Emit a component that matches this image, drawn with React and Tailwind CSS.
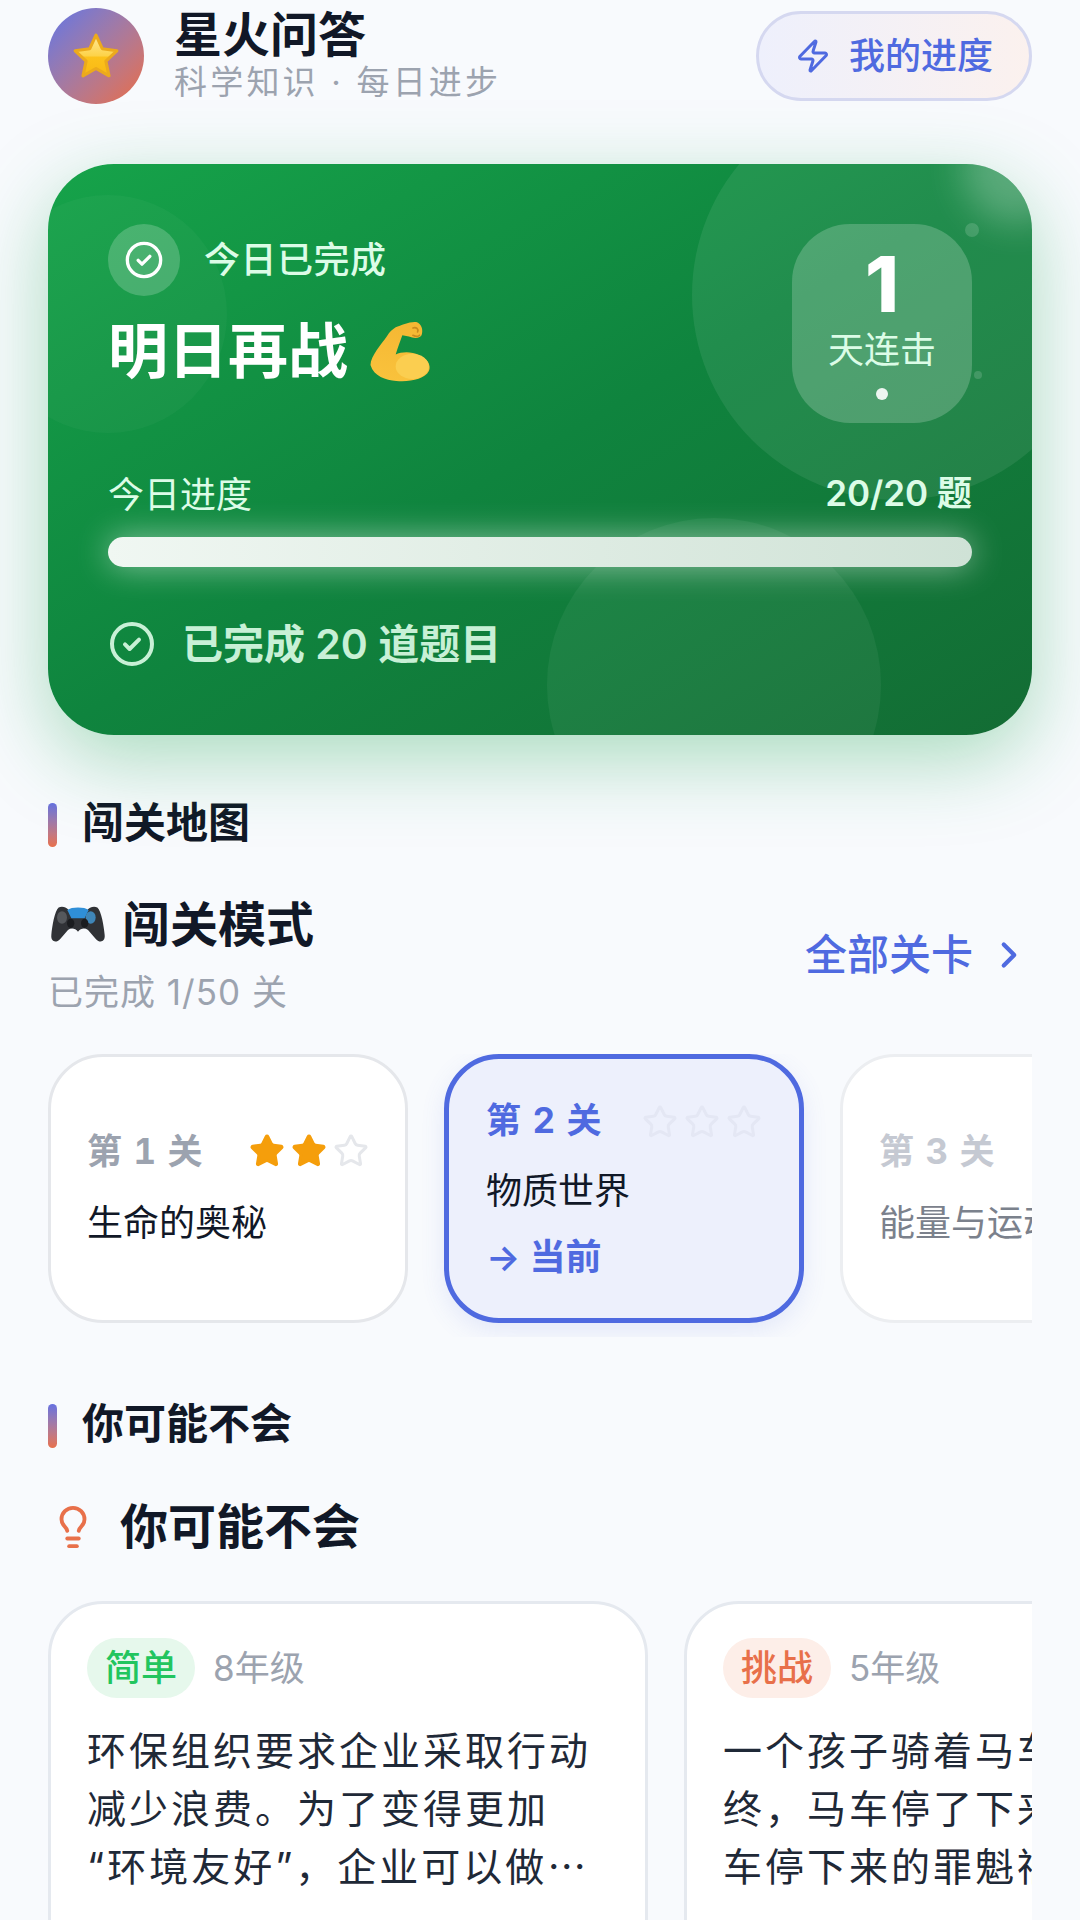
import React from "react";
import { ChevronRight, Lightbulb, Star, Zap } from "lucide-react";

const StarEmoji = () => (
  <svg width="50" height="50" viewBox="0 0 48 48">
    <defs>
      <linearGradient id="starFill" x1="0" y1="0" x2="0" y2="1">
        <stop offset="0" stopColor="#ffe99a" />
        <stop offset="0.5" stopColor="#fdd34a" />
        <stop offset="0.55" stopColor="#fcc21b" />
        <stop offset="1" stopColor="#f9b914" />
      </linearGradient>
    </defs>
    <path
      d="M24 4 L30 17 L44 19 L33.500 29 L36.500 43 L24 36 L11.500 43 L14.500 29 L4 19 L18 17 Z"
      fill="url(#starFill)"
      stroke="#ecaa1c"
      strokeWidth="3"
      strokeLinejoin="round"
    />
  </svg>
);

const MuscleEmoji = () => (
  <svg width="64" height="63" viewBox="25 20 192 190">
    <defs>
      <linearGradient id="armFill" x1="0.6" y1="0" x2="0.4" y2="1">
        <stop offset="0" stopColor="#f5b733" />
        <stop offset="1" stopColor="#f9c23c" />
      </linearGradient>
    </defs>
    <path
      d="M108 42 C125 36 150 24 170 26 C186 30 192 50 186 66 C178 78 160 74 148 70 L128 66 C122 84 114 104 108 124 C125 116 155 114 178 126 C204 136 216 156 208 174 C196 198 150 208 110 204 C78 202 42 190 32 156 C32 128 66 92 82 68 C90 56 98 48 108 42 Z"
      fill="url(#armFill)"
    />
    <ellipse cx="158" cy="160" rx="50" ry="38" fill="#fbce50" />
    <path d="M160 44 C170 40 178 48 174 56 M160 66 C168 70 176 70 180 66" fill="none" stroke="#c98a1e" strokeWidth="5" strokeLinecap="round" />
  </svg>
);

const GamepadEmoji = () => (
  <svg width="56" height="40" viewBox="36 36 168 96" preserveAspectRatio="none">
    <path
      d="M62 42 C74 38 86 42 94 50 L146 50 C154 42 166 38 178 42 C190 50 198 88 200 108 C202 124 186 128 174 118 L150 96 C140 90 128 92 120 100 C112 92 100 90 90 96 L66 118 C54 128 38 124 40 108 C42 88 50 50 62 42 Z"
      fill="#303236"
    />
    <path d="M88 48 C100 40 140 40 152 48 L140 68 H100 Z" fill="#2f8fd8" />
    <circle cx="158" cy="66" r="15" fill="#3f86b8" />
    <circle cx="72" cy="66" r="15" fill="#55585c" />
    <circle cx="98" cy="80" r="11" fill="#1a1c1f" />
    <circle cx="140" cy="80" r="11" fill="#1a1c1f" />
  </svg>
);

const SmallCheck = ({ size }) => (
  <svg width={size} height={size} viewBox="0 0 24 24" fill="none" stroke="currentColor" strokeWidth="2" strokeLinecap="round" strokeLinejoin="round">
    <circle cx="12" cy="12" r="10" />
    <path d="M8.500 12.200 L10.800 14.500 L15.500 9.800" />
  </svg>
);

const SectionTitle = ({ children, className }) => (
  <div className={`flex items-center gap-[25px] px-12 ${className}`}>
    <div className="w-[9px] h-[44px] rounded-full bg-gradient-to-b from-[#6670e0] to-[#e8704a]" />
    <h2 className="text-[42px] leading-[40px] pb-[4px] font-bold text-[#111827]">{children}</h2>
  </div>
);

const Stars = ({ filled, emptyColor }) => (
  <div className="flex gap-[6px]">
    {[0, 1, 2].map((i) =>
      i < filled ? (
        <Star key={i} size={36} strokeWidth={2} className="text-[#f59e0b]" fill="#f59e0b" />
      ) : (
        <Star key={i} size={36} strokeWidth={2} className={emptyColor} />
      )
    )}
  </div>
);

const QuestionCard = ({ level, levelClass, grade, lines }) => (
  <div className="w-[600px] h-[400px] shrink-0 rounded-[55px] border-[3px] border-[#e5e9ef] bg-white px-[36px] pt-[34px]">
    <div className="flex items-center gap-[18px]">
      <span className={`h-[60px] px-[18px] rounded-full flex items-center text-[36px] font-medium ${levelClass}`}>{level}</span>
      <span className="text-[35px] text-[#9ca3af]">{grade}</span>
    </div>
    <div className="mt-[24px] text-[39px] leading-[58px] tracking-[3px] text-[#1f2937] whitespace-nowrap">
      {lines.map((line) => (
        <div key={line}>{line}</div>
      ))}
    </div>
  </div>
);

export default function App() {
  return (
    <div lang="zh-CN" className="w-[1080px] h-[1920px] overflow-hidden bg-[#f8fafd] font-['Inter','Noto_Sans_CJK_SC',sans-serif]">
      <header className="flex items-center justify-between px-12 pt-2">
        <div className="flex items-center gap-[30px]">
          <div className="w-[96px] h-[96px] rounded-full bg-gradient-to-br from-[#5f73e6] to-[#ea6a3c] flex items-center justify-center">
            <StarEmoji />
          </div>
          <div>
            <h1 className="text-[48px] leading-[50px] font-bold text-[#111827]">星火问答</h1>
            <p className="mt-[2px] text-[33px] leading-[40px] tracking-[3.200px] text-[#9ca3af]">科学知识 · 每日进步</p>
          </div>
        </div>
        <button className="w-[276px] h-[90px] rounded-full border-[3px] border-[#d5d8f0] bg-gradient-to-r from-[#eef0fc] to-[#fbf1ee] flex items-center justify-center gap-[18px] text-[#4f6ae0]">
          <Zap size={36} strokeWidth={2} />
          <span className="text-[36px] font-medium">我的进度</span>
        </button>
      </header>

      <section className="relative mx-12 mt-[60px] h-[571px] overflow-hidden rounded-[66px] bg-gradient-to-br from-[#16a34a] via-[#0f843e] to-[#136c34] shadow-[0_24px_80px_rgba(22,163,74,0.35)] px-[60px] pt-[60px]">
        <div className="absolute left-[-59px] top-[31px] w-[238px] h-[238px] rounded-full bg-white/[0.03]" />
        <div className="absolute left-[644px] top-[-74px] w-[410px] h-[410px] rounded-full bg-white/[0.08]" />
        <div className="absolute left-[499px] top-[354px] w-[334px] h-[334px] rounded-full bg-white/[0.05]" />
        <div className="absolute left-[917px] top-[59px] w-[14px] h-[14px] rounded-full bg-white/15" />
        <div className="absolute left-[926px] top-[207px] w-[8px] h-[8px] rounded-full bg-white/15" />
        <div className="absolute right-[-40px] top-[-50px] w-[110px] h-[110px] rounded-full bg-white/25 blur-[18px]" />

        <div className="relative flex items-start justify-between">
          <div>
            <div className="flex items-center gap-[24px]">
              <div className="w-[72px] h-[72px] rounded-full bg-white/20 flex items-center justify-center text-white">
                <SmallCheck size={40} />
              </div>
              <span className="text-[36px] tracking-[0.500px] font-medium text-[#dcfce7]">今日已完成</span>
            </div>
            <div className="mt-[20px] flex items-center gap-[20px]">
              <h2 className="text-[60px] leading-[70px] font-bold text-white">明日再战</h2>
              <MuscleEmoji />
            </div>
          </div>
          <div className="w-[180px] h-[199px] rounded-[58px] bg-white/20 flex flex-col items-center pt-[22px]">
            <span className="text-[77px] leading-[76px] font-extrabold text-white">1</span>
            <span className="mt-[6px] text-[36px] leading-[44px] text-[#dcfce7]">天连击</span>
            <span className="mt-[16px] w-[12px] h-[12px] rounded-full bg-white/90" />
          </div>
        </div>

        <div className="relative mt-[48px] flex items-center justify-between h-[44px]">
          <span className="text-[36px] pt-[3px] text-[#dcfce7]">今日进度</span>
          <span className="text-[35px] font-semibold text-[#dcfce7]">20/20 题</span>
        </div>
        <div className="relative mt-[22px] h-[30px] rounded-full bg-gradient-to-r from-[#f0f7f2] to-[#cfe2d6] shadow-[0_0_33px_rgba(255,255,255,0.5)]" />
        <div className="relative mt-[53px] flex items-center gap-[26px] text-[#c8f0d6]">
          <SmallCheck size={48} />
          <span className="text-[41px] leading-[44px] font-semibold">已完成 20 道题目</span>
        </div>
      </section>

      <SectionTitle className="mt-[68px]">闯关地图</SectionTitle>

      <div className="mt-[50px] flex items-center justify-between px-12 pr-[50px]">
        <div>
          <div className="flex items-center gap-[16px] pl-[2px]">
            <GamepadEmoji />
            <h2 className="text-[48px] leading-[56px] font-bold text-[#111827]">闯关模式</h2>
          </div>
          <p className="mt-[19px] text-[35px] leading-[40px] tracking-[1px] text-[#9ca3af]">已完成 1/50 关</p>
        </div>
        <div className="flex items-center gap-[15px] text-[#4f6ae0]">
          <span className="text-[42px] font-medium">全部关卡</span>
          <ChevronRight size={42} strokeWidth={2.4} />
        </div>
      </div>

      <div className="mx-12 mt-[42px] pb-[14px] overflow-hidden flex gap-[36px]">
        <div className="w-[360px] h-[269px] shrink-0 rounded-[55px] border-[3px] border-[#e5e7eb] bg-white px-[36px] flex flex-col justify-center">
          <div className="flex items-center justify-between">
            <span className="text-[35px] leading-[44px] font-bold text-[#9ca3af] tracking-[1px] tabular-nums">第 1 关</span>
            <Stars filled={2} emptyColor="text-[#e5e7eb]" />
          </div>
          <p className="mt-[28px] text-[36px] leading-[44px] text-[#111827] pb-[4px]">生命的奥秘</p>
        </div>

        <div className="w-[360px] h-[269px] shrink-0 rounded-[55px] border-[5px] border-[#4f6ae0] bg-[#edf0fc] px-[37px] flex flex-col justify-center shadow-[0_8px_24px_rgba(79,106,224,0.12)]">
          <div className="flex items-center justify-between">
            <span className="text-[35px] leading-[44px] font-bold text-[#4f6ae0] tracking-[1px] pb-[4px] tabular-nums">第 2 关</span>
            <Stars filled={0} emptyColor="text-[#e4e7f4]" />
          </div>
          <p className="mt-[23px] text-[36px] leading-[44px] text-[#111827]">物质世界</p>
          <p className="mt-[22px] text-[36px] leading-[44px] font-semibold text-[#4f6ae0]">→ 当前</p>
        </div>

        <div className="w-[360px] h-[269px] shrink-0 rounded-[55px] border-[3px] border-[#eceef1] bg-white px-[36px] flex flex-col justify-center">
          <span className="text-[35px] leading-[44px] font-bold text-[#c5c9d2] tracking-[1px] tabular-nums">第 3 关</span>
          <p className="mt-[28px] text-[36px] leading-[44px] text-[#7b818c] pb-[4px] whitespace-nowrap">能量与运动</p>
        </div>
      </div>

      <SectionTitle className="mt-[67px]">你可能不会</SectionTitle>

      <div className="mt-[51px] flex items-center gap-[24px] px-12 pl-[50px] h-[56px]">
        <Lightbulb size={46} strokeWidth={2} className="text-[#e8704a]" />
        <h2 className="text-[48px] leading-[56px] font-bold text-[#111827]">你可能不会</h2>
      </div>

      <div className="mx-12 mt-[46px] overflow-hidden flex gap-[36px]">
        <QuestionCard
          level="简单"
          levelClass="bg-[#e6f8ec] text-[#22c55e]"
          grade="8年级"
          lines={["环保组织要求企业采取行动", "减少浪费。为了变得更加", "“环境友好”，企业可以做⋯"]}
        />
        <QuestionCard
          level="挑战"
          levelClass="bg-[#fdeee8] text-[#e8704a]"
          grade="5年级"
          lines={["一个孩子骑着马车，最", "终，马车停了下来。马", "车停下来的罪魁祸首是"]}
        />
      </div>
    </div>
  );
}
